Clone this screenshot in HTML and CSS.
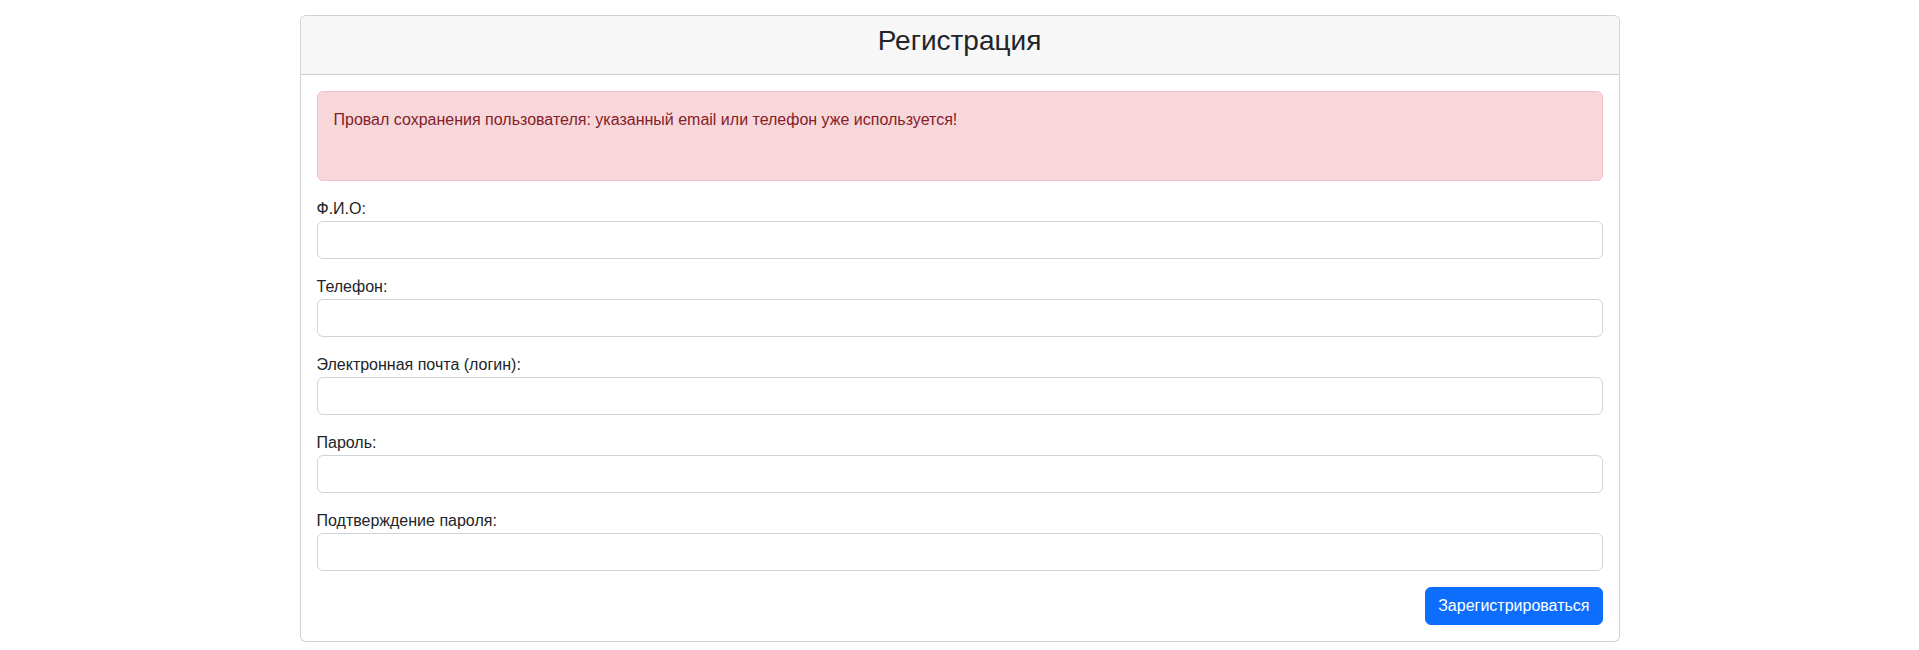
FILE: index.html
```html
<!DOCTYPE html>
<html lang="ru">
<head>
<meta charset="utf-8">
<title>Регистрация</title>
<link rel="stylesheet" href="styles.css">
</head>
<body>
<div class="card">
  <div class="card-header">
    <h3 class="title">Регистрация</h3>
  </div>
  <div class="card-body">
    <div class="alert">
      <p class="alert-text">Провал сохранения пользователя: указанный email или телефон уже используется!</p>
    </div>
    <form class="form">
      <div class="field">
        <label class="label" for="fio">Ф.И.О:</label>
        <input class="input" id="fio" type="text">
      </div>
      <div class="field">
        <label class="label" for="phone">Телефон:</label>
        <input class="input" id="phone" type="text">
      </div>
      <div class="field">
        <label class="label" for="email">Электронная почта (логин):</label>
        <input class="input" id="email" type="text">
      </div>
      <div class="field">
        <label class="label" for="pass">Пароль:</label>
        <input class="input" id="pass" type="password">
      </div>
      <div class="field">
        <label class="label" for="pass2">Подтверждение пароля:</label>
        <input class="input" id="pass2" type="password">
      </div>
      <div class="actions">
        <button class="btn" type="button">Зарегистрироваться</button>
      </div>
    </form>
  </div>
</div>
</body>
</html>
```
FILE: styles.css
```css
* { box-sizing: border-box; }
html, body {
  margin: 0;
  padding: 0;
  background: #fff;
}
body {
  font-family: "Liberation Sans", Arial, sans-serif;
  font-size: 16px;
  line-height: 24px;
  color: #212529;
  padding-top: 15px;
}
.card {
  width: 1320px;
  margin: 0 auto;
  border: 1px solid rgba(0, 0, 0, 0.175);
  border-radius: 6px;
  background: #fff;
  overflow: hidden;
}
.card-header {
  background: #f7f7f7;
  border-bottom: 1px solid rgba(0, 0, 0, 0.175);
  padding: 8px 16px;
}
.title {
  margin: 0 0 8px;
  font-size: 28px;
  line-height: 1.2;
  font-weight: 500;
  text-align: center;
}
.card-body {
  padding: 16px;
}
.alert {
  background: #f8d7da;
  border: 1px solid #f5c2c7;
  color: #842029;
  border-radius: 6px;
  padding: 16px;
  margin-bottom: 16px;
}
.alert-text {
  margin: 0 0 32px;
}
.form {
  display: flex;
  flex-direction: column;
  gap: 16px;
}
.field {
  display: flex;
  flex-direction: column;
}
.label {
  display: block;
  line-height: 24px;
}
.input {
  display: block;
  width: 100%;
  height: 38px;
  border: 1px solid #ced4da;
  border-radius: 6px;
  padding: 6px 12px;
  font: inherit;
  background: #fff;
}
.actions {
  display: flex;
  justify-content: flex-end;
}
.btn {
  background: #0d6efd;
  border: 1px solid #0d6efd;
  color: #fff;
  font: inherit;
  line-height: 24px;
  padding: 6px 12px;
  border-radius: 6px;
  height: 38px;
}
```
